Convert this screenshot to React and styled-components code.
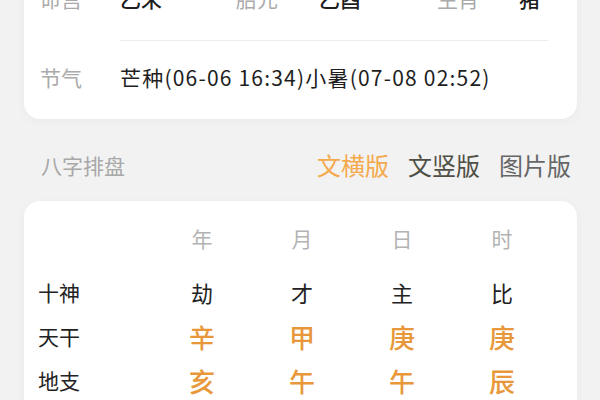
import { Fragment } from "react";
import styled, { createGlobalStyle } from "styled-components";

const GlobalStyle = createGlobalStyle`
  html, body {
    margin: 0;
    padding: 0;
    background: #f2f2f2;
    font-family: "Noto Sans CJK SC", "Noto Sans", sans-serif;
    overflow: hidden;
  }
`;

const Page = styled.div`
  width: 600px;
  height: 400px;
  padding: 0 23px 0 24px;
  box-sizing: border-box;
  overflow: hidden;
`;

const Card = styled.div`
  background: #fff;
  border-radius: 16px;
  box-shadow: 0 2px 10px rgba(0, 0, 0, 0.04);
`;

const InfoCard = styled(Card)`
  margin-top: -32px;
  padding: 0 29px 6px 16px;
  border-top-left-radius: 0;
  border-top-right-radius: 0;
`;

const InfoRow = styled.div`
  display: grid;
  grid-template-columns: ${({ $cols }) => $cols || "80px 1fr"};
  align-items: center;
  height: 72px;
  padding-bottom: ${({ $lift }) => $lift || 0}px;
  box-sizing: border-box;
  font-size: 21px;
  line-height: 28px;
`;

const Label = styled.span`
  color: #aaa;
`;

const Value = styled.span`
  color: #1e1e1e;
  font-weight: ${({ $bold }) => ($bold ? 500 : 400)};
  letter-spacing: ${({ $spread }) => $spread || 0}px;
  white-space: nowrap;
`;

const Divider = styled.div`
  height: 1px;
  background: #ececec;
  margin-left: 80px;
`;

const SectionHeader = styled.div`
  display: flex;
  align-items: center;
  justify-content: space-between;
  height: 82px;
  padding: 9px 6px 0 17px;
  box-sizing: border-box;
`;

const SectionTitle = styled.span`
  font-size: 21px;
  color: #a8a8a8;
`;

const Tabs = styled.div`
  display: flex;
  gap: 19px;
`;

const Tab = styled.span`
  font-size: 24px;
  line-height: 30px;
  color: ${({ $active, $tone }) => ($active ? "#f4a94c" : $tone || "#555")};
`;

const ChartCard = styled(Card)`
  padding: 14px 0 0 14px;
  border-bottom-left-radius: 0;
  border-bottom-right-radius: 0;
  height: 220px;
  box-sizing: border-box;
`;

const ChartGrid = styled.div`
  display: grid;
  grid-template-columns: 114px repeat(4, 100px);
  grid-auto-rows: ${({ $h }) => $h || 44}px;
  align-items: center;
`;

const HeadCell = styled.span`
  text-align: center;
  font-size: 21px;
  color: #b3b3b3;
`;

const RowLabel = styled.span`
  font-size: 21px;
  color: #222;
`;

const Cell = styled.span`
  text-align: center;
  font-size: ${({ $big }) => ($big ? "26px" : "22px")};
  color: ${({ $big }) => ($big ? "#e8983a" : "#222")};
  font-weight: ${({ $big }) => ($big ? 500 : 400)};
`;

const Spacer = styled.div`
  height: ${({ $h }) => $h}px;
`;

const rows = [
  { label: "十神", values: ["劫", "才", "主", "比"], big: false },
  { label: "天干", values: ["辛", "甲", "庚", "庚"], big: true },
  { label: "地支", values: ["亥", "午", "午", "辰"], big: true },
];

export default function App() {
  return (
    <>
      <GlobalStyle />
      <Page>
        <InfoCard>
          <InfoRow $cols="80px 116px 83px 118px 82px 1fr" $lift={12}>
            <Label>命宫</Label>
            <Value $bold>乙未</Value>
            <Label>胎元</Label>
            <Value $bold>乙酉</Value>
            <Label>生肖</Label>
            <Value $bold>猪</Value>
          </InfoRow>
          <Divider />
          <InfoRow>
            <Label>节气</Label>
            <Value $spread={1.2}>芒种(06-06 16:34)小暑(07-08 02:52)</Value>
          </InfoRow>
        </InfoCard>

        <SectionHeader>
          <SectionTitle>八字排盘</SectionTitle>
          <Tabs>
            <Tab $active>文横版</Tab>
            <Tab $tone="#4f4f45">文竖版</Tab>
            <Tab $tone="#666">图片版</Tab>
          </Tabs>
        </SectionHeader>

        <ChartCard>
          <ChartGrid $h={46}>
            <span />
            <HeadCell>年</HeadCell>
            <HeadCell>月</HeadCell>
            <HeadCell>日</HeadCell>
            <HeadCell>时</HeadCell>
          </ChartGrid>
          <Spacer $h={9} />
          <ChartGrid>
            {rows.map((row) => (
              <Fragment key={row.label}>
                <RowLabel>{row.label}</RowLabel>
                {row.values.map((v, i) => (
                  <Cell key={i} $big={row.big}>
                    {v}
                  </Cell>
                ))}
              </Fragment>
            ))}
          </ChartGrid>
        </ChartCard>
      </Page>
    </>
  );
}
